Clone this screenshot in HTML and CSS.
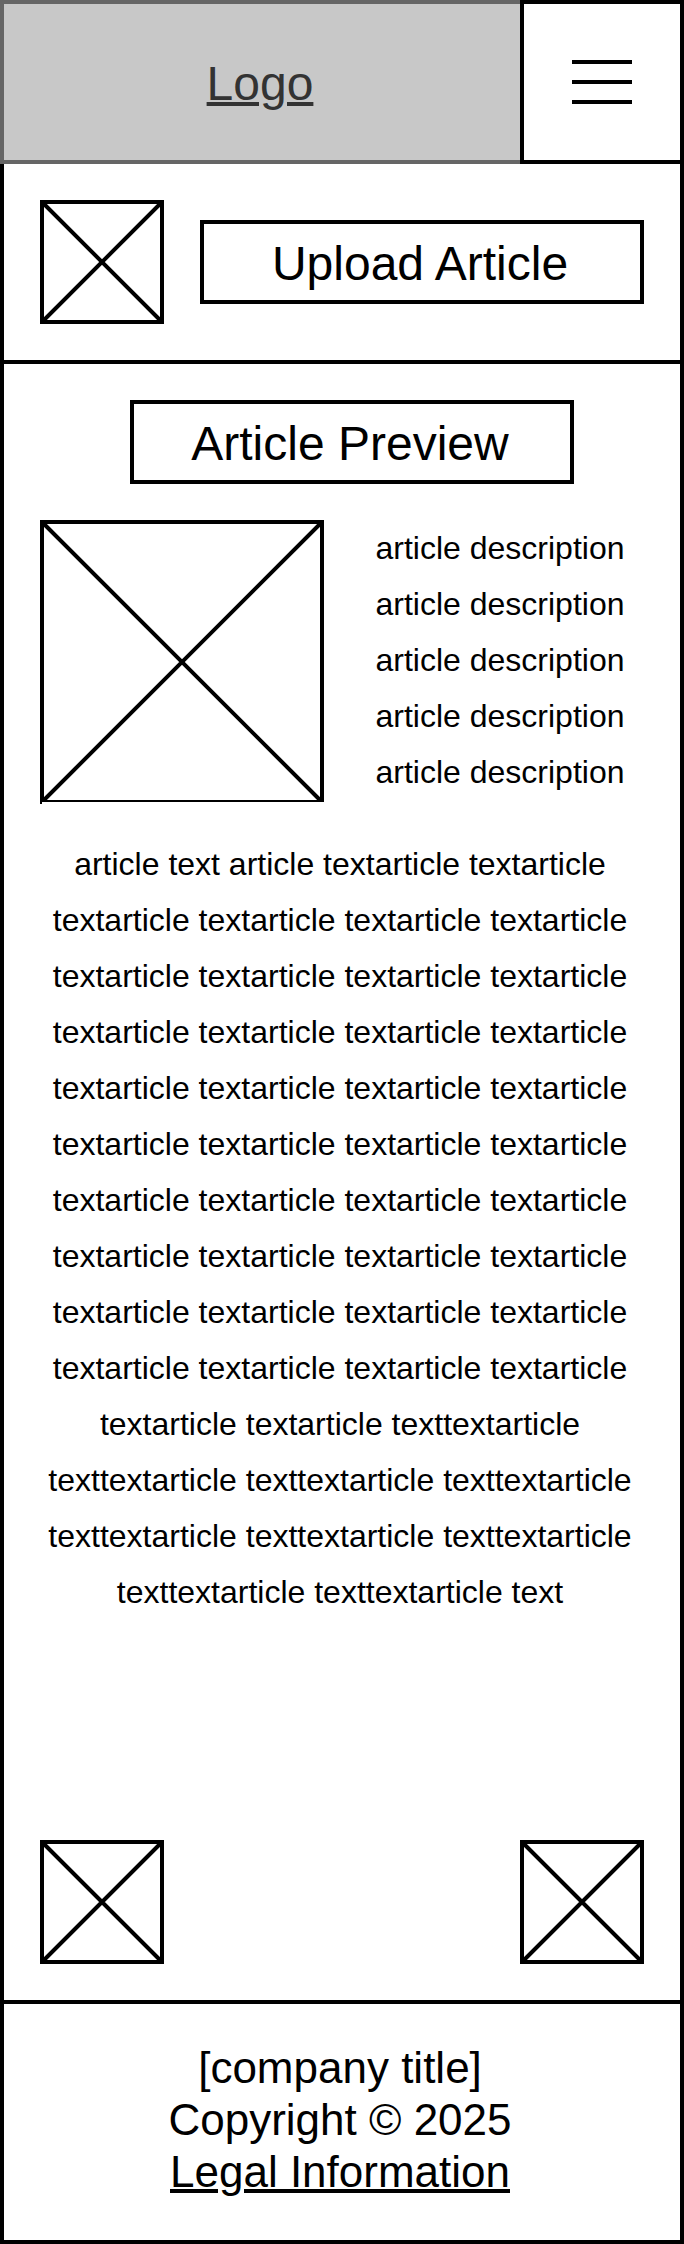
FILE: index.html
```
<!DOCTYPE html>
<html lang="en">
<head>
<meta charset="utf-8">
<meta name="viewport" content="width=device-width, initial-scale=1">
<title>Upload Article</title>
<link rel="stylesheet" href="styles.css">
</head>
<body>
<div class="page">
  <header class="header">
    <a class="logo" href="#">Logo</a>
    <button class="menu" type="button" aria-label="Open menu">
      <span class="menu-bar"></span>
      <span class="menu-bar"></span>
      <span class="menu-bar"></span>
    </button>
  </header>

  <section class="title-row">
    <svg class="icon" viewBox="0 0 124 124" aria-hidden="true"><path d="M2 2H122V122H2ZL122 122M122 2L2 122"/></svg>
    <h1 class="boxed">Upload Article</h1>
  </section>

  <main class="content">
    <div class="preview-title">
      <h2 class="boxed">Article Preview</h2>
    </div>
    <div class="summary">
      <svg class="picture" viewBox="0 0 284 284" role="img" aria-label="Article image">
        <path d="M2 284V2H282V282M2 2L282 282M282 2L2 282"/>
        <rect class="picture-mask" x="2" y="280" width="282" height="4"/>
        <rect class="picture-base" x="0" y="280" width="284" height="2"/>
      </svg>
      <p class="description">article description article description article description article description article description</p>
    </div>
    <p class="article">article text article textarticle textarticle textarticle textarticle textarticle textarticle textarticle textarticle textarticle textarticle textarticle textarticle textarticle textarticle textarticle textarticle textarticle textarticle textarticle textarticle textarticle textarticle textarticle textarticle textarticle textarticle textarticle textarticle textarticle textarticle textarticle textarticle textarticle textarticle textarticle textarticle textarticle textarticle textarticle textarticle texttextarticle texttextarticle texttextarticle texttextarticle texttextarticle texttextarticle texttextarticle texttextarticle texttextarticle text</p>
    <div class="actions">
      <svg class="icon" viewBox="0 0 124 124" aria-hidden="true"><path d="M2 2H122V122H2ZL122 122M122 2L2 122"/></svg>
      <svg class="icon" viewBox="0 0 124 124" aria-hidden="true"><path d="M2 2H122V122H2ZL122 122M122 2L2 122"/></svg>
    </div>
  </main>

  <footer class="footer">
    <p>[company title]</p>
    <p>Copyright © 2025</p>
    <p><a class="legal" href="#">Legal Information</a></p>
  </footer>
</div>
</body>
</html>
```
FILE: styles.css
```
* {
  box-sizing: border-box;
}

body,
h1,
h2,
p {
  margin: 0;
  font-weight: normal;
}

body {
  background: #fff;
  color: #000;
  font-family: "Liberation Sans", Arial, Helvetica, sans-serif;
  font-size: 32px;
  line-height: 56px;
}

.page {
  display: flex;
  flex-direction: column;
  min-height: 100vh;
}

.header {
  display: flex;
}

.logo {
  flex: 1;
  padding: 52px 8px 48px 4px;
  border: 4px solid #666;
  border-right: 0;
  background: #c8c8c8;
  color: #333;
  font-size: 48px;
  text-align: center;
  text-decoration-thickness: 4px;
}

.menu {
  display: flex;
  flex-direction: column;
  align-items: center;
  justify-content: center;
  gap: 16px;
  width: 164px;
  padding: 0;
  border: 4px solid #000;
  border-radius: 0;
  background: #fff;
}

.menu-bar {
  width: 60px;
  height: 4px;
  background: #000;
}

.title-row {
  display: flex;
  align-items: center;
  gap: 36px;
  padding: 36px;
  border: solid #000;
  border-width: 0 4px 4px;
}

.icon,
.picture {
  display: block;
  flex: none;
  fill: none;
  stroke: #000;
  stroke-width: 4;
}

.icon {
  width: 124px;
}

.picture {
  width: 284px;
}

.picture-mask {
  fill: #fff;
  stroke: none;
}

.picture-base {
  fill: #000;
  stroke: none;
}

.boxed {
  flex: 1;
  padding: 12px 12px 8px 8px;
  border: 4px solid #000;
  font-size: 48px;
  text-align: center;
}

.content {
  display: flex;
  flex: 1;
  flex-direction: column;
  padding: 36px;
  border: solid #000;
  border-width: 0 4px;
}

.preview-title {
  display: flex;
  padding: 0 70px 0 90px;
}

.summary {
  display: flex;
  gap: 32px;
  margin-top: 36px;
}

.description {
  flex: 1;
  text-align: center;
}

.article {
  margin: 32px 4px 0 0;
  text-align: center;
}

.actions {
  display: flex;
  justify-content: space-between;
  margin-top: auto;
}

.footer {
  padding: 38px 8px 42px 4px;
  border: 4px solid #000;
  font-size: 44px;
  line-height: 52px;
  text-align: center;
}

.legal {
  color: inherit;
  text-decoration-thickness: 4px;
}
```
